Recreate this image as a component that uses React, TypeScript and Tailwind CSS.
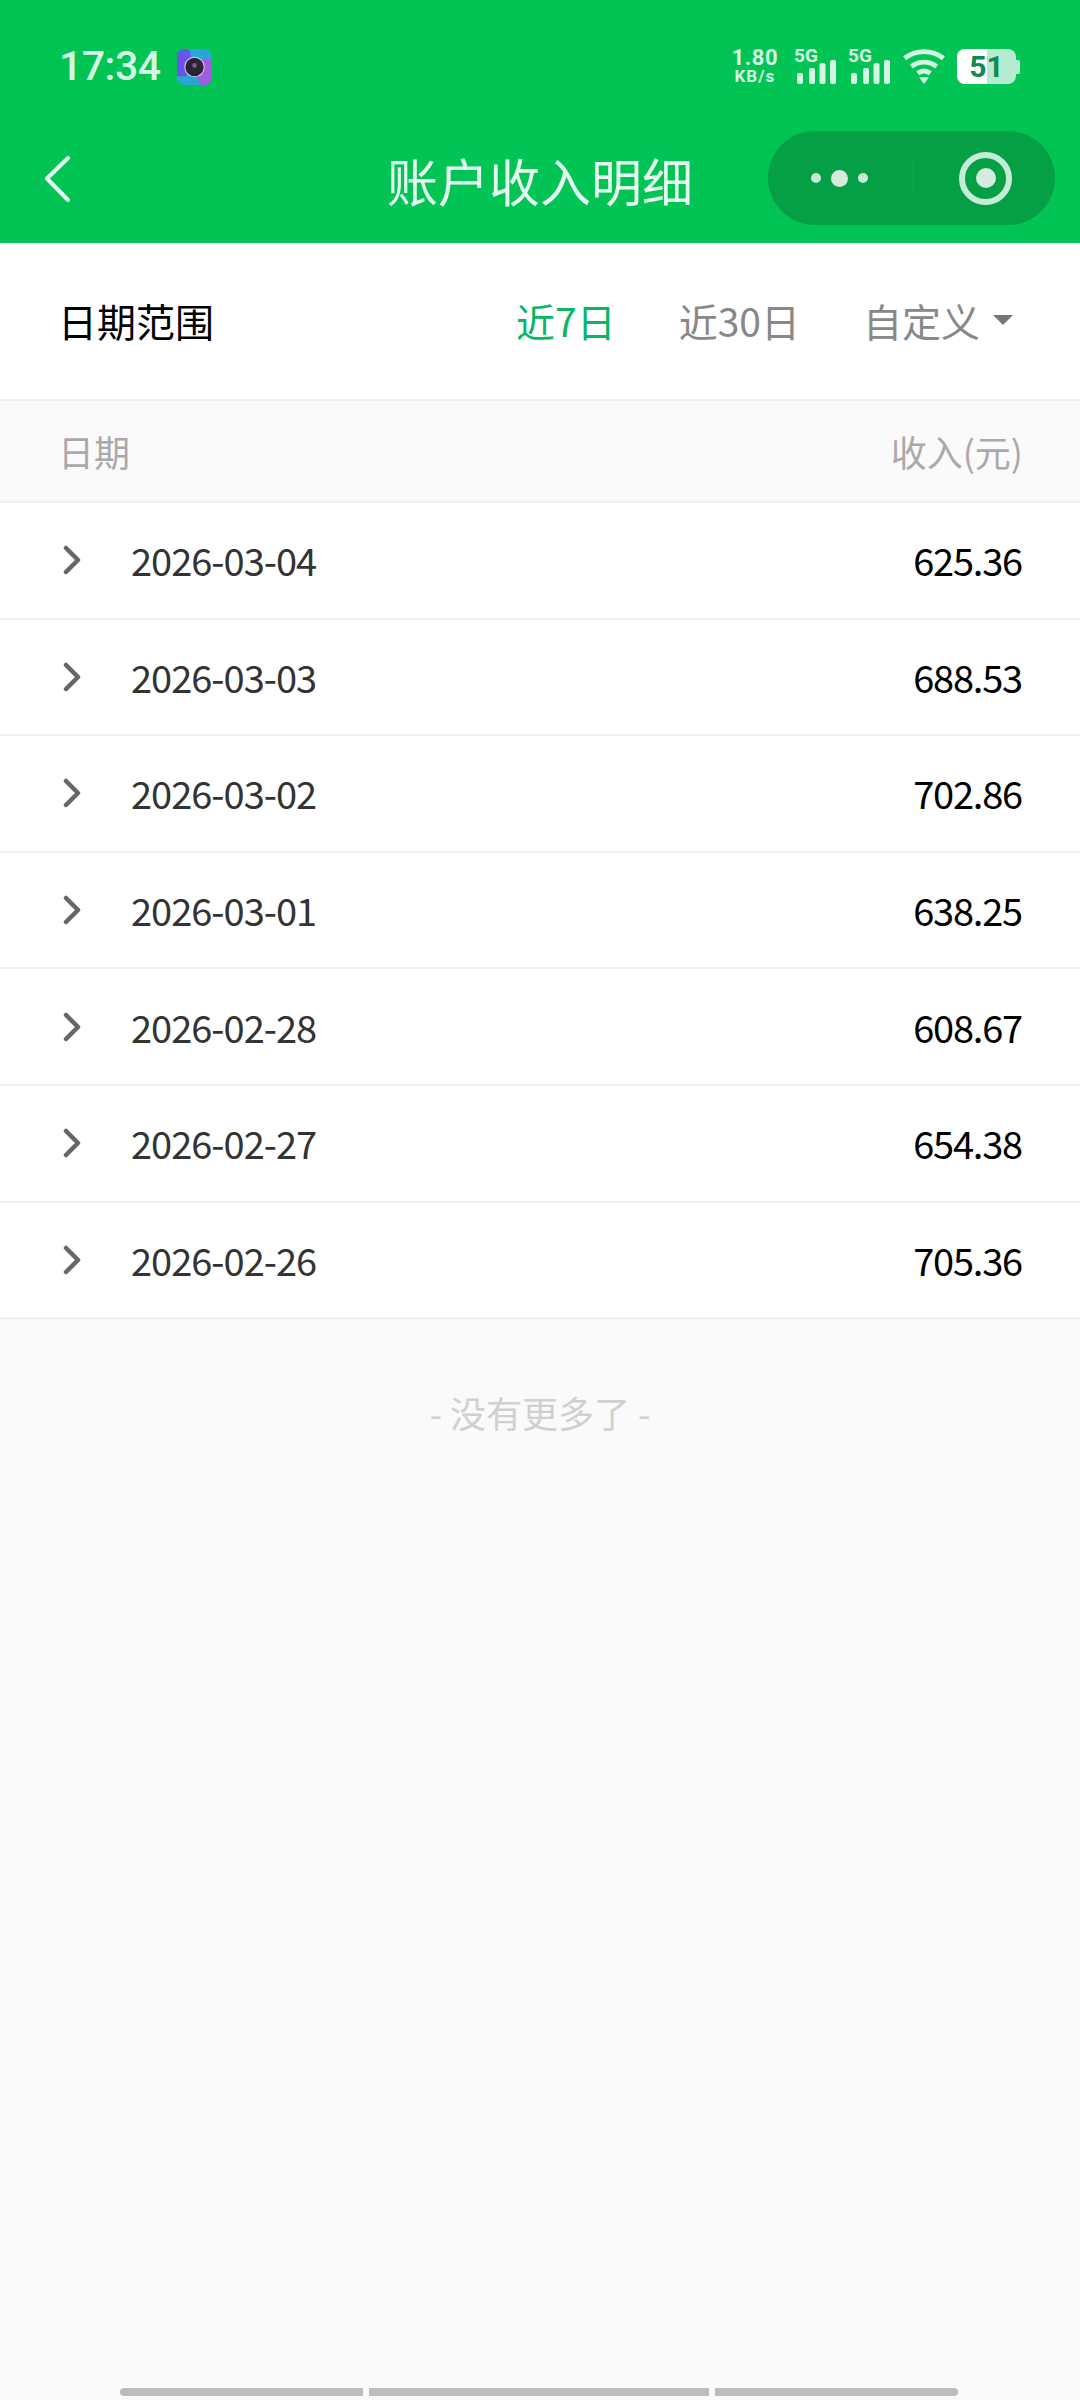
const rows = [
  { date: "2026-03-04", amount: "625.36" },
  { date: "2026-03-03", amount: "688.53" },
  { date: "2026-03-02", amount: "702.86" },
  { date: "2026-03-01", amount: "638.25" },
  { date: "2026-02-28", amount: "608.67" },
  { date: "2026-02-27", amount: "654.38" },
  { date: "2026-02-26", amount: "705.36" },
];

function CameraIcon() {
  return (
    <svg width="35" height="36" viewBox="0 0 36 37">
      <rect width="36" height="37" rx="8" fill="#2aa5d8" />
      <path d="M0 8a8 8 0 0 1 8-8h4l4 12-6 16H0z" fill="#6a55e8" />
      <path d="M36 10v19a8 8 0 0 1-8 8h-4l-4-11 6-16z" fill="#a25ce0" />
      <circle cx="18" cy="18.5" r="10.5" fill="#d8d8e8" />
      <circle cx="18" cy="18.5" r="9.5" fill="#2c2238" />
      <circle cx="18" cy="17" r="2.5" fill="#7a5a70" />
    </svg>
  );
}

function Signal() {
  return (
    <div className="relative w-[42px] h-[35px]">
      <span className="absolute left-0 top-[-2px] text-[19px] leading-[18px] font-bold text-[#d4f7e4]">5G</span>
      <svg className="absolute left-[3px] bottom-0" width="39" height="24" viewBox="0 0 39 24" fill="#d4f7e4">
        <rect x="0" y="13" width="6" height="11" rx="2" />
        <rect x="12" y="8" width="6" height="16" rx="2" />
        <rect x="22.5" y="3" width="6" height="21" rx="2" />
        <rect x="33" y="0" width="6" height="24" rx="2" />
      </svg>
    </div>
  );
}

function WifiIcon() {
  return (
    <svg width="44" height="35" viewBox="0 0 44 36" fill="none" stroke="#d4f7e4" strokeWidth="5">
      <path d="M2 9.5c12-9 28-9 40 0" />
      <path d="M9 18c8-6 18-6 26 0" />
      <path d="M15.5 25c4-3 9-3 13 0" />
      <path d="M17 29h10l-5 7z" fill="#d4f7e4" stroke="none" />
    </svg>
  );
}

function Battery() {
  return (
    <div className="flex items-center">
      <div className="relative w-[59px] h-[35px] rounded-[8px] bg-[#b5ecd0] overflow-hidden">
        <div className="h-full w-[30px] bg-white" />
        <span className="absolute inset-0 flex items-center justify-center text-[30px] font-bold text-[#0f8a52] leading-none">51</span>
      </div>
      <div className="w-[4px] h-[14px] rounded-r-[2px] bg-[#b5ecd0]" />
    </div>
  );
}

function Chevron() {
  return (
    <svg className="mr-[50px]" width="18" height="30" viewBox="0 0 18 30" fill="none" stroke="#666666" strokeWidth="4.5" strokeLinecap="round" strokeLinejoin="round">
      <path d="M3 3l12 12L3 27" />
    </svg>
  );
}

export default function App() {
  return (
    <div
      className="w-[1080px] h-[2400px] bg-[#fafafa] flex flex-col relative overflow-hidden"
      style={{ fontFamily: '"Noto Sans CJK SC", "Noto Sans", sans-serif' }}
    >
      <div className="bg-[#02c455] h-[243px] shrink-0 flex flex-col">
        {/* status bar */}
        <div className="h-[133px] pl-[59px] pr-[60px] flex items-center justify-between">
          <div className="flex items-center gap-[16px]">
            <span className="text-[41px] leading-none font-medium tracking-[-0.5px] text-[#d4f7e4]" style={{ fontFamily: "Roboto, sans-serif" }}>17:34</span>
            <CameraIcon />
          </div>
          <div className="flex items-center" style={{ fontFamily: "Roboto, sans-serif" }}>
            <div className="flex flex-col items-center text-[#d4f7e4] font-bold mr-[16px]">
              <span className="text-[22px] leading-[20px] tracking-[0.5px]">1.80</span>
              <span className="text-[17px] leading-[17px] tracking-[1px]">KB/s</span>
            </div>
            <Signal />
            <div className="ml-[12px]">
              <Signal />
            </div>
            <div className="ml-[12px] mr-[11px]">
              <WifiIcon />
            </div>
            <Battery />
          </div>
        </div>
        {/* nav bar */}
        <div className="relative h-[110px] flex items-center justify-center pb-[16px]">
          <svg className="absolute left-[44px] top-[22px]" width="26" height="48" viewBox="0 0 26 48" fill="none" stroke="#e6fbf0" strokeWidth="4" strokeLinecap="round" strokeLinejoin="round">
            <path d="M24 3L3 23.5 24 45" />
          </svg>
          <span className="text-[51px] leading-none text-[#e6fbf0]">账户收入明细</span>
          <div className="absolute left-[768px] top-[-2px] w-[287px] h-[94px] rounded-full bg-[#05a045] flex items-center">
            <div className="w-[144px] flex items-center justify-center gap-[10px] pr-[1px]">
              <span className="w-[10px] h-[10px] rounded-full bg-[#c5ecd6]" />
              <span className="w-[17px] h-[17px] rounded-full bg-[#d6ecdf]" />
              <span className="w-[10px] h-[10px] rounded-full bg-[#c5ecd6]" />
            </div>
            <div className="w-px h-[40px] bg-[#06a548]" />
            <div className="flex-1 flex items-center justify-center pl-[3px]">
              <div className="w-[53px] h-[53px] rounded-full border-[6px] border-[#c5ecd6] flex items-center justify-center">
                <span className="w-[20px] h-[20px] rounded-full bg-[#d6ecdf]" />
              </div>
            </div>
          </div>
        </div>
      </div>

      {/* date range filter */}
      <div className="h-[158px] shrink-0 bg-white border-b-2 border-[#f0f0f0] flex items-center pl-[58px] pr-[67px] pb-[2px]">
        <span className="text-[39px] text-black leading-none flex-1">日期范围</span>
        <span className="text-[39px] leading-none text-[#07b764] mr-[63px]">近7日</span>
        <span className="text-[39px] leading-none text-[#888888] mr-[63px]">近30日</span>
        <span className="text-[39px] leading-none text-[#888888]">自定义</span>
        <span className="ml-[13px] w-0 h-0 border-x-[10px] border-x-transparent border-t-[10px] border-t-[#777777]" />
      </div>

      {/* table header */}
      <div className="h-[102px] shrink-0 bg-[#fafafa] border-b-2 border-[#f0f0f0] flex items-center justify-between pl-[58px] pr-[57px] text-[36px] leading-none text-[#aaaaaa]">
        <span>日期</span>
        <span>收入(元)</span>
      </div>

      {/* rows */}
      {rows.map((row) => (
        <div key={row.date} className="h-[116.6px] shrink-0 bg-white border-b-2 border-[#f0f0f0] flex items-center pl-[63px] pr-[58px]">
          <Chevron />
          <span className="flex-1 text-[38px] leading-none tracking-[-1px] text-[#333333]">{row.date}</span>
          <span className="text-[38px] leading-none tracking-[-1.2px] text-black">{row.amount}</span>
        </div>
      ))}

      <div className="pt-[75px] text-center text-[36px] leading-none text-[#d0d0d0]">- 没有更多了 -</div>

      {/* gesture bar */}
      <div className="absolute left-[120px] top-[2388px] flex gap-[6px] h-[8px]">
        <div className="w-[243px] bg-[#bdbdbd] rounded-l-full" />
        <div className="w-[340px] bg-[#bdbdbd]" />
        <div className="w-[243px] bg-[#bdbdbd] rounded-r-full" />
      </div>
    </div>
  );
}
